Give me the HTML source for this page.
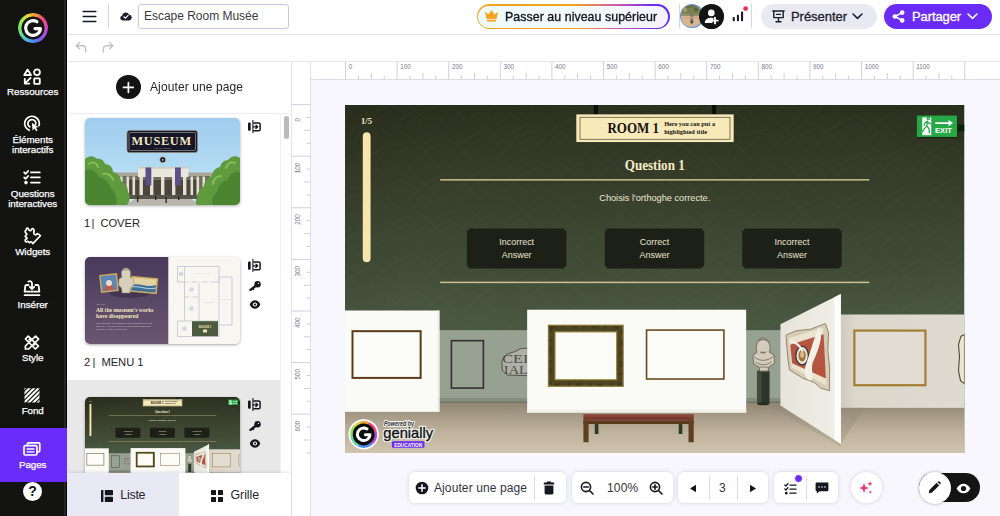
<!DOCTYPE html>
<html lang="fr">
<head>
<meta charset="utf-8">
<title>Escape Room Musée</title>
<style>
*{box-sizing:border-box;margin:0;padding:0}
html,body{width:1000px;height:516px;overflow:hidden;background:#fff;font-family:"Liberation Sans",sans-serif;color:#1b1b1b}
.abs{position:absolute}
#side{position:absolute;left:0;top:0;width:67px;height:516px;background:#131312;border-right:1px solid #000;box-shadow:inset -2px 0 0 #262626}
.sitem{position:absolute;left:0;width:65.400px;text-align:center;color:#fff;font-size:9.800px;line-height:10px;letter-spacing:-0.05px;margin-top:1px;-webkit-text-stroke:0.25px #fff}
.sitem svg{display:block;margin:0 auto}
#pagesbtn{position:absolute;left:0;top:427.700px;width:67px;height:54.100px;background:#6a2cfa}
#top{position:absolute;left:67px;top:0;width:933px;height:35px;background:#fff;border-bottom:1px solid #e3e3ee}
#bar2{position:absolute;left:67px;top:35px;width:933px;height:27px;background:#fff;border-bottom:1px solid #e6e6ee}
#panel{position:absolute;left:67px;top:62px;width:225px;height:454px;background:#fff;border-right:1px solid #e4e4ec}
#canvas{position:absolute;left:292px;top:62px;width:708px;height:454px;background:#f7f7fd}
.thumb{position:absolute;left:85px;width:155px;height:87px;border-radius:5px;overflow:hidden;box-shadow:0 1px 3px rgba(0,0,0,.35)}
.plabel{position:absolute;left:84px;font-size:11.200px;color:#26262e;letter-spacing:-0.05px;white-space:nowrap}
.tbox{position:absolute;top:472.200px;height:31px;background:#fff;border-radius:6px;box-shadow:0 0 4px rgba(60,60,90,.2)}
.ttext{position:absolute;font-size:12px;color:#33333d;white-space:nowrap;margin-top:0.800px}
</style>
</head>
<body>
<svg width="0" height="0" style="position:absolute">
<defs>
<linearGradient id="gbg" x1="0" y1="0" x2="0" y2="1">
<stop offset="0" stop-color="#2c311f"/><stop offset="0.22" stop-color="#363e2a"/><stop offset="0.45" stop-color="#404b35"/><stop offset="0.62" stop-color="#4a5842"/><stop offset="0.8" stop-color="#4d5c48"/><stop offset="1" stop-color="#4c5a47"/>
</linearGradient>
<radialGradient id="vig" cx="0.55" cy="0.45" r="0.75">
<stop offset="0" stop-color="#5a6a50" stop-opacity="0.06"/><stop offset="0.6" stop-color="#000" stop-opacity="0"/><stop offset="1" stop-color="#000" stop-opacity="0.12"/>
</radialGradient>
<linearGradient id="floor" x1="0" y1="0" x2="0" y2="1">
<stop offset="0" stop-color="#8f8572"/><stop offset="0.25" stop-color="#a59a86"/><stop offset="0.6" stop-color="#bfb39d"/><stop offset="1" stop-color="#d0c4ae"/>
</linearGradient>
<linearGradient id="awall" x1="0" y1="0" x2="1" y2="0">
<stop offset="0" stop-color="#e6e4da"/><stop offset="0.5" stop-color="#ebe9e0"/><stop offset="0.88" stop-color="#efeee6"/><stop offset="1" stop-color="#f2f1ea"/>
</linearGradient>
<linearGradient id="rwall" x1="0" y1="0" x2="1" y2="0">
<stop offset="0" stop-color="#cfcabd"/><stop offset="0.12" stop-color="#dcd7cb"/><stop offset="1" stop-color="#dedad0"/>
</linearGradient>
<pattern id="hatch" width="46" height="38" patternUnits="userSpaceOnUse" patternTransform="rotate(-8)">
<path d="M0 30 Q20 10 46 6 M4 38 Q24 16 46 14 M0 6 Q18 20 30 38 M10 0 Q28 18 40 38" fill="none" stroke="#8a9a78" stroke-opacity="0.07" stroke-width="0.6"/>
</pattern>
<symbol id="slide" viewBox="0 0 620 349">
<rect width="620" height="349" fill="url(#gbg)"/>
<rect width="620" height="349" fill="url(#hatch)"/>
<rect width="620" height="349" fill="url(#vig)"/>
<!-- back wall -->
<rect x="90" y="225.5" width="420" height="74" fill="#97a192"/>
<rect x="90" y="293.500" width="420" height="3.500" fill="#858e7e"/><rect x="90" y="297" width="420" height="2.200" fill="#5f6659"/>
<!-- floor -->
<rect x="0" y="298" width="620" height="51" fill="url(#floor)"/>
<!-- small dark frame -->
<rect x="106.5" y="236" width="32" height="47.5" fill="#98a293" stroke="#352f36" stroke-width="1.6"/>
<!-- stone fragment -->
<path d="M183 243.500 L176 244 L170 247 L162 249.500 L157 256 L157.500 266 L163 270.500 L183 271 Z" fill="#aeb0a6" stroke="#4a4b46" stroke-width="0.9"/>
<text x="157.500" y="258.500" font-family="Liberation Serif,serif" font-size="13" fill="#4a4a45" textLength="26" lengthAdjust="spacingAndGlyphs">CEI</text>
<text x="159" y="269.500" font-family="Liberation Serif,serif" font-size="13" fill="#4a4a45" textLength="24" lengthAdjust="spacingAndGlyphs">IAL</text>
<!-- bust -->
<rect x="412.300" y="266.500" width="12.600" height="33" rx="1.500" fill="#2c3628"/>
<rect x="412.300" y="266.500" width="4.500" height="33" fill="#4a5644" opacity=".7"/>
<ellipse cx="418.600" cy="299.300" rx="6.300" ry="1.500" fill="#232b20"/>
<ellipse cx="418.600" cy="266.700" rx="6.300" ry="1.400" fill="#3d4838"/>
<path d="M415 266.500 L414.500 262.500 L409 259 L408.300 251 L412.500 247.500 C410.500 243 411.500 234.500 418.500 233 C425.500 234.500 426.500 243 424.500 247.500 L429.500 250.500 L429.800 258.500 L424 262.500 L423.500 266.500 Z" fill="#d3cbbb" stroke="#6b6152" stroke-width="0.800"/>
<path d="M412.300 240 C412.300 232 424.700 232 424.700 240 C423.500 236.500 421 235.500 418.500 235.500 C416 235.500 413.500 236.500 412.300 240 Z" fill="#857a68"/>
<path d="M415 247 C416.500 249.500 420.500 249.500 422 247" fill="#857a68"/>
<path d="M409.500 252 C414 257 423 257 429 251.500 M411 257.500 C416 261 422 261 427 257 M415 262.500 L423.500 262.500" fill="none" stroke="#7a6f5e" stroke-width="0.900"/>
<!-- left wall -->
<rect x="0" y="205.8" width="94.5" height="101.5" fill="#fafaf6"/>
<rect x="92.5" y="205.8" width="2" height="101.500" fill="#efeee8"/>
<rect x="7.5" y="226.5" width="68.200" height="46.8" fill="#fcfcf9" stroke="#5b3c18" stroke-width="2"/>
<!-- center wall -->
<rect x="182.3" y="205" width="219.200" height="103" fill="#fafaf6"/>
<rect x="182.3" y="305" width="219.200" height="3" fill="#f0efe8"/>
<!-- thick frame -->
<rect x="203" y="220" width="76" height="62.3" fill="#8a7430"/>
<rect x="204.400" y="221.400" width="73.200" height="59.500" fill="#4d4525"/><rect x="205.500" y="222.500" width="71" height="57.300" fill="none" stroke="#2f301c" stroke-width="2.500" stroke-dasharray="6 5 3 7" opacity=".45"/>
<rect x="209.6" y="226.600" width="62.8" height="49.1" fill="#a08a3e"/>
<rect x="210.8" y="227.8" width="60.4" height="46.7" fill="#fbfbf8"/>
<!-- thin frame -->
<rect x="301.8" y="225.4" width="77.4" height="49" fill="#fbfbf8" stroke="#6b4a1e" stroke-width="1.6"/>
<!-- bench -->
<path d="M238.6 310 L349 310 L349 316 L238.6 316 Z" fill="#7a3a2e"/>
<path d="M238.6 310 L349 310 L347 312.500 L240.6 312.500 Z" fill="#8b463a"/>
<path d="M238.6 316 L349 316 L349 319.500 L238.6 319.500 Z" fill="#5a3a1c"/>
<rect x="238.6" y="316" width="5.200" height="21.7" fill="#5e3f1f"/>
<rect x="343.800" y="316" width="5.200" height="21.7" fill="#5e3f1f"/>
<rect x="250" y="319.500" width="3.6" height="10" fill="#2f3a22"/>
<rect x="334" y="319.500" width="3.6" height="10" fill="#2f3a22"/>
<!-- right wall -->
<rect x="496" y="209.8" width="124" height="93.5" fill="url(#rwall)"/>
<rect x="509.800" y="225.900" width="71.100" height="54.7" fill="#e2ddd2" stroke="#a07f34" stroke-width="2.2"/>
<path d="M620 230 L616.500 231.500 L614 240 L615 252 L614 266 L616 276 L620 279 Z" fill="#ece5d2" stroke="#5a4630" stroke-width="1.100"/>
<!-- angled wall shadow on floor -->
<path d="M496.200 339.200 L496.200 303.300 L520 303.300 Z" fill="#8d8372" opacity=".3"/>
<path d="M435.8 300.9 L422 300 L496.200 342 L496.200 339.200 Z" fill="#8d8372" opacity=".25"/>
<!-- angled wall -->
<path d="M496.200 189.300 L496.200 339.200 L435.800 300.900 L435.800 219.600 Z" fill="url(#awall)"/>
<path d="M489.800 192.500 L496.200 189.300 L496.200 339.200 L489.800 335.200 Z" fill="#fefefc"/>
<!-- mosaic -->
<path d="M441.300 230.400 L452 226 L466 224.500 L480.800 218.800 L484 228 L483.200 246 L485 262 L485 286.200 L476 283.500 L470 278 L458 273.500 L444.800 265.300 L443 252 Z" fill="#d6ccb6" stroke="#8b7d63" stroke-width="0.900"/>
<path d="M444 233.500 L478.500 223 L482 281 L447 263 Z" fill="#ece3cf"/>
<path d="M445.500 240 L479 229.500 L481.300 274 L447.500 258.500 Z" fill="#b5543f"/>
<ellipse cx="457.500" cy="251" rx="6.300" ry="9.200" fill="#ebe2cc" stroke="#2e3552" stroke-width="1.300"/>
<ellipse cx="457.500" cy="251" rx="3.600" ry="5.800" fill="#a0703c"/>
<ellipse cx="457.500" cy="250" rx="2" ry="3.200" fill="#d8b98a"/>
<path d="M474 222 C480 228 474 246 468 258 C466 266 470 272 466 276 C460 274 458 268 462 258 C466 246 470 232 474 222 Z" fill="#f3f0e8"/>
<path d="M446 236 C452 238 456 242 458 247" stroke="#f3f0e8" stroke-width="2.200" fill="none"/>
<g transform="translate(0,-0.600)"><!-- UI: plaque -->
<rect x="249" y="0" width="4.200" height="10" fill="#0d0d0b"/>
<rect x="367.200" y="0" width="4.200" height="10" fill="#0d0d0b"/>
<rect x="231.500" y="10" width="157.500" height="27.7" fill="#f8e9b9"/>
<rect x="235.200" y="12.900" width="150.100" height="22" fill="none" stroke="#4a452e" stroke-width="0.7"/>
<text x="262.700" y="28.800" font-family="Liberation Serif,serif" font-weight="bold" font-size="15.500" fill="#15140f" textLength="51.6" lengthAdjust="spacingAndGlyphs">ROOM 1</text>
<text x="319.400" y="21.500" font-family="Liberation Serif,serif" font-weight="bold" font-size="6" fill="#15140f" textLength="51" lengthAdjust="spacingAndGlyphs">Here you can put a</text>
<text x="319.400" y="29.300" font-family="Liberation Serif,serif" font-weight="bold" font-size="6" fill="#15140f" textLength="43" lengthAdjust="spacingAndGlyphs">highlighted title</text>
<!-- question -->
<text x="310" y="66" text-anchor="middle" font-family="Liberation Serif,serif" font-weight="bold" font-size="14.500" fill="#f7ecc6" textLength="60" lengthAdjust="spacingAndGlyphs">Question 1</text>
<rect x="95.200" y="74.800" width="429.500" height="1.5" fill="#cfc08c"/>
<rect x="95.200" y="177.500" width="429.500" height="1.5" fill="#cfc08c"/>
<text x="310" y="97.200" text-anchor="middle" font-family="Liberation Sans,sans-serif" font-size="9" fill="#ece8d6" textLength="111" lengthAdjust="spacingAndGlyphs">Choisis l'orthoghe correcte.</text>
<!-- buttons -->
<g fill="#1d2016">
<path id="btn" d="M124 124.200 L219.500 124.200 L219.500 126.200 L221.500 126.200 L221.500 162.300 L219.500 162.300 L219.500 164.300 L124 164.300 L124 162.300 L122 162.300 L122 126.200 L124 126.200 Z"/>
<use href="#btn" x="138"/>
<use href="#btn" x="275.600"/>
</g>
<g font-family="Liberation Sans,sans-serif" font-size="9" fill="#e8e4d2" text-anchor="middle">
<text x="171.800" y="141.200">Incorrect</text><text x="171.800" y="153.800">Answer</text>
<text x="309.800" y="141.200">Correct</text><text x="309.800" y="153.800">Answer</text>
<text x="447.400" y="141.200">Incorrect</text><text x="447.400" y="153.800">Answer</text>
</g>
<!-- progress -->
<text x="21.500" y="20" text-anchor="middle" font-family="Liberation Serif,serif" font-weight="bold" font-size="8.500" fill="#f7ecc6">1/5</text>
<rect x="17.800" y="28" width="7.800" height="130" rx="3.900" fill="#f8e4ae"/>
<!-- exit -->
<rect x="612" y="20.200" width="8" height="6.800" fill="#0b2208"/>
<rect x="573" y="12.600" width="40.100" height="21.400" fill="#0c0f08" opacity=".45"/>
<rect x="572.400" y="11.200" width="40.100" height="21.400" fill="#27a846"/>
<rect x="577.700" y="13" width="9" height="17.800" fill="#fff"/>
<path d="M583.800 15.200 a1.100 1.100 0 1 1 0.100 0 M583 16.800 L580.500 18.500 L579.500 21 M583 16.800 L582.300 21.500 L579.800 24.500 L577.600 27.500 M582.300 21.500 L584.500 24.500 L584.800 28.500 M583.500 18 L585.800 19.500" stroke="#27a846" stroke-width="1.300" fill="none" stroke-linecap="round" stroke-linejoin="round"/>
<path d="M590.700 18.700 L606 18.700" stroke="#fff" stroke-width="1.800"/>
<path d="M604 15.600 L608.500 18.700 L604 21.800 Z" fill="#fff"/>
<text x="590.500" y="28.800" font-family="Liberation Sans,sans-serif" font-weight="bold" font-size="7.600" fill="#fff" textLength="17" lengthAdjust="spacingAndGlyphs">EXIT</text>
</g><!-- genially logo -->
<circle cx="18.700" cy="329.800" r="15.200" fill="#fff"/>
<circle cx="18.700" cy="329.800" r="12" fill="#0d0d0d"/>
<g fill="none" stroke-width="2.500" transform="translate(18.700,329.800)">
<path d="M-3.100 -11.800 A12.200 12.200 0 0 1 5.200 -11" stroke="#f5a030"/>
<path d="M5.200 -11 A12.200 12.200 0 0 1 11.900 -2.600" stroke="#f0457f"/>
<path d="M11.900 -2.600 A12.200 12.200 0 0 1 7.800 9.400" stroke="#b04cd8"/>
<path d="M7.800 9.400 A12.200 12.200 0 0 1 -5.200 11" stroke="#4a8cf5"/>
<path d="M-5.200 11 A12.200 12.200 0 0 1 -12.100 1.500" stroke="#5fd6a0"/>
<path d="M-12.100 1.500 A12.200 12.200 0 0 1 -9.400 -7.800" stroke="#8fe04a"/>
<path d="M-9.400 -7.800 A12.200 12.200 0 0 1 -3.100 -11.800" stroke="#d0e040"/>
<path d="M3.300 -5.400 A6.300 6.300 0 1 0 6.300 0.500 L1.800 0.500" stroke="#fff" stroke-width="3" stroke-linecap="round" stroke-linejoin="round"/>
</g>
<g font-family="Liberation Sans,sans-serif" stroke-linejoin="round">
<text x="39" y="321.500" font-size="6.600" font-style="italic" font-weight="bold" fill="#fff" stroke="#fff" stroke-width="1.800" textLength="30" lengthAdjust="spacingAndGlyphs">Powered by</text>
<text x="39" y="321.500" font-size="6.600" font-style="italic" font-weight="bold" fill="#2a2a2a" textLength="30" lengthAdjust="spacingAndGlyphs">Powered by</text>
<text x="38.300" y="333.400" font-size="15.200" fill="#fff" stroke="#fff" stroke-width="2.600" textLength="50" lengthAdjust="spacingAndGlyphs">genially</text>
<text x="38.300" y="333.400" font-size="15.200" fill="#151515" stroke="#151515" stroke-width="0.450" textLength="50" lengthAdjust="spacingAndGlyphs">genially</text>
</g>
<rect x="47" y="336.700" width="32.500" height="6.600" rx="1" fill="#6a2cf5"/>
<text x="63.300" y="342" text-anchor="middle" font-family="Liberation Sans,sans-serif" font-weight="bold" font-size="5" fill="#fff" textLength="28" lengthAdjust="spacingAndGlyphs">EDUCATION</text>
</symbol>
</defs>
</svg>
<svg width="0" height="0" style="position:absolute"><defs>
<symbol id="ic-ins" viewBox="0 0 13 13"><rect x="0" y="2.600" width="2.700" height="8.100" rx="1" fill="#16161e"/><path d="M4.900 0.400 V12.400" stroke="#16161e" stroke-width="1.100" fill="none" stroke-linecap="round"/><path d="M5.300 2.900 H10.700 C11.500 2.900 12.100 3.400 12.100 4.200 V9.400 C12.100 10.200 11.500 10.700 10.700 10.700 H5.300" stroke="#16161e" stroke-width="1.500" fill="none"/><path d="M5.300 6.800 H9.400 M7.900 5.100 L9.700 6.800 L7.900 8.500" stroke="#16161e" stroke-width="1.300" fill="none" stroke-linecap="round" stroke-linejoin="round"/></symbol>
<symbol id="ic-key" viewBox="0 0 12 10"><circle cx="8.600" cy="3.300" r="3.200" fill="#16161e"/><circle cx="9.500" cy="2.400" r="0.700" fill="#fff"/><path d="M6.800 4.800 L1.500 8.900" stroke="#16161e" stroke-width="2.400" stroke-linecap="round"/><path d="M3.600 7.400 L4.600 8.600" stroke="#16161e" stroke-width="1.300" stroke-linecap="round"/></symbol>
<symbol id="ic-eye" viewBox="0 0 12 9"><path d="M0.700 4.500 C2 1.600 3.900 0.300 6 0.300 C8.100 0.300 10 1.600 11.300 4.500 C10 7.400 8.100 8.700 6 8.700 C3.900 8.700 2 7.400 0.700 4.500 Z" fill="#16161e"/><circle cx="6" cy="4.500" r="2.100" fill="#fff"/><circle cx="6" cy="4.500" r="1.100" fill="#16161e"/></symbol>
</defs></svg>
<!-- SIDEBAR -->
<div id="side">
<!-- logo -->
<div class="abs" style="left:17.900px;top:13.300px;width:29.800px;height:29.800px;border-radius:50%;background:conic-gradient(from 0deg,#f5a030 0deg,#f5a030 12deg,#f0457f 45deg,#e048a0 75deg,#b04cd8 105deg,#8a55e8 140deg,#4a8cf5 180deg,#4ab8e0 205deg,#5fd6a0 235deg,#7ee060 275deg,#b4e444 315deg,#e0d838 340deg,#f5a030 360deg);-webkit-mask:radial-gradient(circle,transparent 11.200px,#000 11.800px);mask:radial-gradient(circle,transparent 11.200px,#000 11.800px)"></div>
<svg class="abs" style="left:16.800px;top:12.200px" width="32" height="32" viewBox="-16 -16 32 32">
<path d="M3.900 -6.300 A7.400 7.400 0 1 0 7.400 0.600 L2 0.600" fill="none" stroke="#fff" stroke-width="3.200" stroke-linecap="round" stroke-linejoin="round"/>
</svg>

<!-- Ressources -->
<svg class="abs" style="left:23.3px;top:68px" width="19" height="17" viewBox="0 0 19 17" fill="none" stroke="#fff" stroke-width="1.800">
<path d="M4.6 1.6 L8 7 L1.2 7 Z" stroke-linejoin="round"/>
<circle cx="14" cy="4.2" r="2.9"/>
<rect x="11.2" y="10.3" width="5.6" height="5.6" rx="0.6"/>
<path d="M7.6 9.8 L2 15.4 M1.8 11 L1.8 15.6 L6.4 15.6" stroke-linecap="round" stroke-linejoin="round"/>
</svg>
<div class="sitem" style="top:86px">Ressources</div>

<!-- Elements interactifs -->
<svg class="abs" style="left:23.3px;top:115px" width="18" height="17" viewBox="0 0 18 17" fill="none" stroke="#fff" stroke-width="1.700">
<path d="M6.2 15.3 A7.3 7.3 0 1 1 16 10.6" stroke-linecap="round"/>
<path d="M6.8 11.8 A3.9 3.9 0 1 1 12.7 9.2" stroke-linecap="round"/>
<path d="M8.8 7.8 L9.6 15.6 L11.5 13.4 L13.2 16.3 L14.5 15.5 L12.9 12.6 L15.7 12.2 Z" fill="#fff" stroke="none"/>
</svg>
<div class="sitem" style="top:134px">Éléments<br>interactifs</div>

<!-- Questions interactives -->
<svg class="abs" style="left:23.3px;top:170px" width="18" height="15" viewBox="0 0 18 15" fill="none" stroke="#fff" stroke-width="1.800" stroke-linecap="round" stroke-linejoin="round">
<path d="M1.2 2.4 L2.6 3.8 L5.2 1"/><path d="M8 2.4 L16.8 2.4"/>
<path d="M1.2 7.4 L2.6 8.8 L5.2 6"/><path d="M8 7.4 L16.8 7.4"/>
<circle cx="3" cy="12.6" r="0.9" fill="#fff"/><path d="M8 12.6 L16.8 12.6"/>
</svg>
<div class="sitem" style="top:188px">Questions<br>interactives</div>

<!-- Widgets -->
<svg class="abs" style="left:24.300px;top:226.600px" width="18" height="18" viewBox="0 0 18 18" fill="none" stroke="#fff" stroke-width="1.700" stroke-linejoin="round" stroke-linecap="round">
<path d="M2.00 3.00 C2.75 1.67 2.15 0.97 3.50 1.20 C4.85 1.43 4.35 3.53 6.05 3.70 C7.75 3.87 7.25 1.70 8.60 1.70 C9.95 1.70 9.70 2.43 10.10 3.70 C10.50 4.97 9.73 4.32 9.80 5.50 C9.87 6.68 9.53 6.50 10.30 7.25 C11.07 8.00 11.00 7.92 12.10 7.75 C13.20 7.58 12.17 6.41 13.60 6.75 C15.03 7.09 16.40 8.76 16.40 8.76 L8.80 16.60 C8.80 16.60 8.23 15.13 7.06 14.80 C5.89 14.47 6.39 15.77 5.30 15.60 C4.21 15.43 4.90 14.57 3.80 14.30 C2.70 14.03 2.85 15.30 2.00 14.80 C1.15 14.30 0.93 13.97 1.26 12.80 C1.59 11.63 3.00 12.48 3.00 11.30 C3.00 10.12 1.33 10.62 1.26 9.27 C1.19 7.92 2.80 8.61 2.80 7.25 C2.80 5.89 1.53 6.62 1.26 5.20 C0.99 3.78 1.25 4.33 2.00 3.00 Z"/>
</svg>
<div class="sitem" style="top:246px">Widgets</div>

<!-- Inserer -->
<svg class="abs" style="left:23.3px;top:280px" width="18" height="17" viewBox="0 0 18 17" fill="none" stroke="#fff" stroke-width="1.800" stroke-linecap="round" stroke-linejoin="round">
<path d="M5.5 5 L3.6 5 C2.8 5 2.4 5.5 2.3 6.2 L1.6 11.6 L16.4 11.6 L15.7 6.2 C15.6 5.5 15.2 5 14.4 5 L12.5 5"/>
<path d="M1.6 15.2 L16.4 15.2"/>
<path d="M5.4 1.6 C7.6 0.6 9 1.6 9 3.6 L9 8.6 M6.8 6.8 L9 9 L11.2 6.8"/>
</svg>
<div class="sitem" style="top:299px">Insérer</div>

<!-- Style -->
<svg class="abs" style="left:24.3px;top:335px" width="16" height="15" viewBox="0 0 16 15" fill="none" stroke="#fff" stroke-width="1.700" stroke-linecap="round" stroke-linejoin="round">
<path d="M11.6 1.2 L14.6 4.2 L4.6 14 L1.4 14 L1.4 11 Z"/>
<path d="M4.2 1.2 L1.4 4 L11.4 14 L14.4 11.2 Z"/>
<path d="M5 5 L6.4 3.6 M10 10 L11.4 8.6"/>
</svg>
<div class="sitem" style="top:352px">Style</div>

<!-- Fond -->
<svg class="abs" style="left:24.3px;top:388px" width="16" height="15" viewBox="0 0 16 15" stroke="#fff" stroke-width="2.1">
<clipPath id="cf"><rect x="0.5" y="0.3" width="15" height="14.2"/></clipPath>
<g clip-path="url(#cf)">
<path d="M-3 4 L5 -4 M-3 8.6 L9.6 -4 M-3 13.2 L14.2 -4 M-1 15.8 L18 -3.2 M3.6 15.8 L18 1.4 M8.2 15.8 L18 6 M12.8 15.8 L18 10.6"/>
</g>
</svg>
<div class="sitem" style="top:405px">Fond</div>

<!-- Pages -->
<div id="pagesbtn"></div>
<svg class="abs" style="left:23.3px;top:442px" width="18" height="14" viewBox="0 0 18 14" fill="none" stroke="#fff" stroke-width="1.700" stroke-linejoin="round" stroke-linecap="round">
<path d="M4.4 3.4 L4.4 2 C4.4 1.3 4.9 0.8 5.6 0.8 L15.6 0.8 C16.3 0.8 16.8 1.3 16.8 2 L16.8 8.6 C16.8 9.3 16.3 9.8 15.6 9.8 L14.4 9.8"/>
<rect x="1" y="3.6" width="13" height="9.4" rx="1.4"/>
<path d="M4 7 L11 7 M4 9.8 L11 9.8" stroke-width="1.3"/>
</svg>
<div class="sitem" style="top:459px">Pages</div>

<!-- help -->
<div class="abs" style="left:23px;top:481.800px;width:19px;height:19px;border-radius:50%;background:#fff;color:#111;font-weight:bold;font-size:14px;line-height:19.500px;text-align:center">?</div>
</div>
<!-- TOP BAR -->
<div id="top"></div>
<!-- hamburger -->
<svg class="abs" style="left:82px;top:10px" width="15" height="13" viewBox="0 0 15 13" stroke="#16162a" stroke-width="1.5" stroke-linecap="round"><path d="M1.2 1.5 L13.8 1.5 M1.2 6.6 L13.8 6.6 M1.2 11.6 L13.8 11.6"/></svg>
<div class="abs" style="left:108px;top:4px;width:1px;height:24px;background:#d6d6e6"></div>
<!-- cloud -->
<svg class="abs" style="left:120px;top:12px" width="12" height="9" viewBox="0 0 12 9"><path d="M3 8.4 C1.4 8.4 0.3 7.4 0.3 6 C0.3 4.8 1.1 3.9 2.2 3.7 C2.4 1.9 3.9 0.6 5.7 0.6 C7.2 0.6 8.4 1.4 9 2.7 C10.6 2.8 11.7 4 11.7 5.5 C11.7 7.1 10.5 8.4 8.9 8.4 Z" fill="#1c1c2c"/><path d="M3.9 4.8 L5.4 6.2 L8.1 3.4" fill="none" stroke="#fff" stroke-width="1.2" stroke-linecap="round" stroke-linejoin="round"/></svg>
<!-- title input -->
<div class="abs" style="left:138px;top:4px;width:151px;height:25px;border:1px solid #c8c8e4;border-radius:3px;background:#fff"></div>
<div class="abs" id="ttl" style="left:144px;top:9px;font-size:12px;line-height:15px;color:#3a3a44;white-space:nowrap;letter-spacing:-0.02px">Escape Room Musée</div>

<!-- upgrade button -->
<div class="abs" style="left:476.800px;top:3.900px;width:193px;height:25.200px;border-radius:13px;background:linear-gradient(90deg,#f5a21c 0%,#f5a21c 50%,#d05ab0 72%,#6a2cf5 92%,#5a2cf5 100%)"></div>
<div class="abs" style="left:478.400px;top:5.500px;width:189.800px;height:22px;border-radius:11px;background:linear-gradient(90deg,#eefafa 0%,#f1fafb 60%,#f5f2ff 100%)"></div>
<svg class="abs" style="left:485px;top:10px" width="13" height="12" viewBox="0 0 13 12" fill="#f5a21c"><path d="M0.6 2.6 L3.6 5 L6.5 0.6 L9.4 5 L12.4 2.6 L11.2 8.6 L1.8 8.6 Z" stroke="#f5a21c" stroke-width="0.8" stroke-linejoin="round"/><rect x="1.8" y="9.8" width="9.4" height="1.6" rx="0.6"/></svg>
<div class="abs" id="upg" style="left:505px;top:9px;font-size:13px;line-height:15px;color:#16161e;white-space:nowrap;-webkit-text-stroke:0.35px #16161e;letter-spacing:0.05px;transform-origin:0 50%;transform:scaleX(.953)">Passer au niveau supérieur</div>

<div class="abs" style="left:679px;top:4px;width:1px;height:24px;background:#d6d6e6"></div>
<!-- avatar -->
<div class="abs" style="left:679.500px;top:4.200px;width:24px;height:24px;border-radius:50%;background:#5b8df6;overflow:hidden">
<div class="abs" style="left:1.300px;top:1.300px;width:21.400px;height:21.400px;border-radius:50%;overflow:hidden;background:#d7b58c">
<svg width="22" height="22" viewBox="0 0 22 22" style="position:absolute;left:0;top:0"><rect width="22" height="22" fill="#d9b68c"/><rect width="22" height="9.500" fill="#76814f"/><path d="M0 9 C3 7 5 10 8 8.500 C11 7 13 10 16 8.500 C18 7.500 20 9 22 8 L22 11 L0 11 Z" fill="#8c8f60"/><path d="M0 2 C4 0 7 4 11 2 C15 0 18 3 22 1 L22 0 L0 0 Z" fill="#5f6d43"/><circle cx="4" cy="5" r="2" fill="#a0a070"/><circle cx="15" cy="4.500" r="2.200" fill="#59683f"/><rect x="9.300" y="9.500" width="3" height="7.500" rx="1.200" fill="#6f7680"/><circle cx="10.800" cy="8.800" r="1.300" fill="#7a736a"/><rect x="9.500" y="16" width="2.600" height="2.400" fill="#4c4a44"/><path d="M0 12 C6 11 16 11 22 12 L22 14 L0 14 Z" fill="#c9a57c" opacity=".6"/></svg>
</div></div>
<!-- add user -->
<div class="abs" style="left:699.200px;top:4.200px;width:24.600px;height:24.600px;border-radius:50%;background:#141414"></div>
<svg class="abs" style="left:703px;top:8px" width="17" height="17" viewBox="0 0 17 17" fill="#fff"><circle cx="8.300" cy="4.900" r="3.300"/><path d="M1.800 15 C1.800 11.600 4.600 9.700 8.300 9.700 C9.600 9.700 10.300 9.900 10.900 10.200 C9.600 11.300 9.200 13 9.600 15 Z"/><path d="M12 9.800 V15.400 M9.200 12.600 H14.800" stroke="#fff" stroke-width="1.900" stroke-linecap="round"/></svg>
<!-- stats -->
<svg class="abs" style="left:731px;top:4px" width="20" height="20" viewBox="731 4 20 20"><rect x="732.700" y="17.100" width="2.100" height="4.200" rx="0.700" fill="#1c1c2c"/><rect x="736.900" y="14.800" width="2.100" height="6.500" rx="0.700" fill="#1c1c2c"/><rect x="741" y="11.600" width="2.100" height="9.700" rx="0.700" fill="#1c1c2c"/><circle cx="745.600" cy="8.600" r="2.400" fill="#e8304f"/></svg>
<div class="abs" style="left:751px;top:4px;width:1px;height:24px;background:#d6d6e6"></div>

<!-- Presenter -->
<div class="abs" style="left:761px;top:4px;width:116px;height:25px;border-radius:13px;background:#e9e9f2"></div>
<svg class="abs" style="left:772px;top:10px" width="13" height="13" viewBox="0 0 13 13" fill="none" stroke="#1c1c2c" stroke-width="1.4" stroke-linejoin="round" stroke-linecap="round"><path d="M0.8 1 L12.2 1"/><path d="M1.8 1.2 L1.8 7.6 L11.2 7.6 L11.2 1.2"/><path d="M4.6 4.4 L8.4 4.4"/><path d="M6.5 7.8 L6.5 11.6 M4 11.8 L9 11.8"/></svg>
<div class="abs" id="pres" style="left:791px;top:9px;font-size:13px;line-height:15px;color:#1c1c2c;white-space:nowrap;-webkit-text-stroke:0.3px #1c1c2c;letter-spacing:-0.05px">Présenter</div>
<svg class="abs" style="left:852px;top:13px" width="11" height="7" viewBox="0 0 11 7" fill="none" stroke="#1c1c2c" stroke-width="1.5" stroke-linecap="round" stroke-linejoin="round"><path d="M1 1 L5.5 5.4 L10 1"/></svg>

<!-- Partager -->
<div class="abs" style="left:884px;top:4px;width:108px;height:25px;border-radius:13px;background:#6a2cf5"></div>
<svg class="abs" style="left:892px;top:10px" width="13" height="13" viewBox="0 0 13 13" fill="#fff"><circle cx="10.2" cy="2.6" r="2.3"/><circle cx="2.8" cy="6.5" r="2.3"/><circle cx="10.2" cy="10.4" r="2.3"/><path d="M2.8 6.5 L10.2 2.6 M2.8 6.5 L10.2 10.4" stroke="#fff" stroke-width="1.5"/></svg>
<div class="abs" id="part" style="left:912px;top:9px;font-size:13px;line-height:15px;color:#fff;white-space:nowrap;-webkit-text-stroke:0.3px #fff;letter-spacing:-0.1px">Partager</div>
<svg class="abs" style="left:967px;top:13px" width="11" height="7" viewBox="0 0 11 7" fill="none" stroke="#fff" stroke-width="1.5" stroke-linecap="round" stroke-linejoin="round"><path d="M1 1 L5.5 5.4 L10 1"/></svg>

<div id="bar2"></div>
<svg class="abs" style="left:75px;top:42px" width="12" height="11" viewBox="0 0 12 11" fill="none" stroke="#c2c2cc" stroke-width="1.500" stroke-linecap="round" stroke-linejoin="round"><path d="M4.4 0.8 L1.2 3.8 L4.4 6.8 M1.4 3.8 L7.4 3.8 C9.4 3.8 10.6 5 10.6 7 L10.6 10"/></svg>
<svg class="abs" style="left:102px;top:42px" width="12" height="11" viewBox="0 0 12 11" fill="none" stroke="#c2c2cc" stroke-width="1.500" stroke-linecap="round" stroke-linejoin="round"><path d="M7.6 0.8 L10.8 3.8 L7.6 6.8 M10.6 3.8 L4.6 3.8 C2.6 3.8 1.4 5 1.4 7 L1.4 10"/></svg>

<!-- PANEL -->
<div id="panel"></div>
<!-- add page -->
<div class="abs" style="left:116px;top:74.500px;width:24.500px;height:24.500px;border-radius:50%;background:#141414"></div>
<svg class="abs" style="left:122px;top:80.500px" width="13" height="13" viewBox="0 0 13 13"><path d="M6.400 1.500 V11.300 M1.500 6.400 H11.300" stroke="#fff" stroke-width="1.700" stroke-linecap="round"/></svg>
<div class="abs" id="ajp" style="left:149.700px;top:79px;font-size:12.800px;line-height:15px;color:#26262e;white-space:nowrap;letter-spacing:0.100px;transform-origin:0 50%;transform:scaleX(.94)">Ajouter une page</div>
<div class="abs" style="left:67px;top:113px;width:225px;height:1px;background:#ececf2"></div>
<div class="abs" style="left:279.500px;top:114px;width:1px;height:359px;background:#f0f0f5"></div>
<div class="abs" style="left:283.500px;top:116px;width:5px;height:22.500px;border-radius:2.500px;background:#b9b9bf"></div>
<!-- selected bg -->
<div class="abs" style="left:67px;top:379.500px;width:213px;height:94px;background:#e8e8e9"></div>

<!-- thumb 1 -->
<div class="thumb" style="top:118px">
<svg width="155" height="87" viewBox="0 0 155 87">
<defs><linearGradient id="sky" x1="0" y1="0" x2="0" y2="1"><stop offset="0" stop-color="#9fcdee"/><stop offset="0.600" stop-color="#b4dbf3"/><stop offset="1" stop-color="#d5ecf8"/></linearGradient></defs>
<rect width="155" height="87" fill="url(#sky)"/>
<!-- ground -->
<path d="M40 87 L56 77 L100 77 L116 87 Z" fill="#b9b6ae"/>
<rect x="0" y="80" width="155" height="7" fill="#7f9a5c" opacity=".0"/>
<!-- building -->
<rect x="26" y="54.500" width="103" height="3.600" fill="#a9a597"/>
<rect x="30" y="58" width="95" height="20" fill="#6f6b5e"/>
<rect x="42" y="62" width="71" height="16" fill="#4a463c"/>
<g fill="#e4e0d4">
<rect x="35" y="58.500" width="2.600" height="19"/><rect x="41.500" y="58.500" width="2.600" height="19"/><rect x="47.500" y="58.500" width="2.600" height="19"/>
<rect x="54.500" y="59" width="3.400" height="19"/><rect x="65" y="59" width="3.400" height="19"/><rect x="76" y="59" width="3.400" height="19"/><rect x="87" y="59" width="3.400" height="19"/><rect x="98" y="59" width="3.400" height="19"/>
<rect x="105.500" y="58.500" width="2.600" height="19"/><rect x="111.500" y="58.500" width="2.600" height="19"/><rect x="117.500" y="58.500" width="2.600" height="19"/>
</g>
<rect x="53" y="49" width="50.500" height="10" fill="#e9e6dc"/>
<rect x="53" y="49" width="50.500" height="1.600" fill="#cfcbbf"/>
<rect x="60.500" y="49.500" width="5.800" height="18" fill="#5b4f8a"/><rect x="90" y="49.500" width="5.800" height="18" fill="#5b4f8a"/>
<rect x="30" y="77" width="95" height="4" fill="#57544a"/>
<g fill="#24241f"><rect x="52" y="78" width="1.300" height="6"/><rect x="70" y="78" width="1.300" height="4"/><rect x="80.500" y="79" width="1.300" height="6"/><rect x="93" y="78" width="1.300" height="4"/></g>
<!-- trees -->
<path d="M0 87 L0 41 C4 37 9 37.500 12 41 C16 40 19 43 20 46 C25 46 28 50 28 54 C33 55 36 59 36 63 C40 65 43 69 43 74 C46 78 45 84 42 87 Z" fill="#5f9a3e"/>
<path d="M0 87 L0 52 C6 50 12 54 14 59 C20 60 25 65 26 71 C31 74 33 81 31 87 Z" fill="#4b8532"/>
<path d="M4 46 C8 43 12 45 13 49 M18 56 C23 55 27 58 28 62" stroke="#86bd5a" stroke-width="2" fill="none" stroke-linecap="round"/>
<path d="M155 87 L155 40 C151 37 146 38 143 42 C139 42 136 45 135 49 C130 50 127 54 127 58 C122 60 119 64 119 68 C115 70 112 75 112 80 C110 83 111 86 112 87 Z" fill="#5f9a3e"/>
<path d="M155 87 L155 54 C149 53 144 57 143 62 C137 63 133 68 132 74 C128 77 126 83 128 87 Z" fill="#4b8532"/>
<path d="M150 45 C146 43 142 46 141 50 M136 58 C131 58 128 62 128 66" stroke="#86bd5a" stroke-width="2" fill="none" stroke-linecap="round"/>
<!-- plaque -->
<rect x="42" y="12.500" width="70.500" height="22" rx="2.500" fill="#17172c" stroke="#8f8a78" stroke-width="0.800"/>
<rect x="44" y="14.500" width="66.500" height="18" rx="1.500" fill="none" stroke="#d9cfa6" stroke-width="0.500"/>
<text x="76.300" y="27.300" text-anchor="middle" font-family="Liberation Serif,serif" font-weight="bold" font-size="12.300" fill="#f3e7bd" textLength="59.500" lengthAdjust="spacing">MUSEUM</text>
<text x="77.300" y="31.200" text-anchor="middle" font-family="Liberation Serif,serif" font-size="2.400" fill="#cfc59f">ESCAPE ROOM</text>
<circle cx="77.700" cy="41.800" r="3" fill="#17172c" stroke="#d9cfa6" stroke-width="0.600"/><circle cx="77.700" cy="41.800" r="0.900" fill="#d9cfa6"/>
</svg></div>
<svg class="abs" style="left:248px;top:119.800px" width="13" height="13"><use href="#ic-ins"/></svg>
<div class="plabel" id="pl1" style="top:216px;line-height:14px">1<span style="margin-left:1.200px">|</span><span style="margin-left:6.200px">COVER</span></div>

<!-- thumb 2 -->
<div class="thumb" style="top:257px">
<svg width="155" height="87" viewBox="0 0 155 87">
<defs><linearGradient id="pur" x1="0" y1="0" x2="0" y2="1"><stop offset="0" stop-color="#49395b"/><stop offset="1" stop-color="#695670"/></linearGradient></defs>
<rect width="155" height="87" fill="#f8f6f0"/>
<rect width="83.300" height="87" fill="url(#pur)"/>
<ellipse cx="45" cy="36" rx="20" ry="5" fill="#3c2f4c" opacity=".7"/>
<g transform="rotate(-6 24 26)"><rect x="15" y="17" width="18" height="18" fill="#c9a85a"/><rect x="16.500" y="18.500" width="15" height="15" fill="#5b86b8"/><path d="M18 33 L24 22 L29 33 Z" fill="#c25a4a"/><circle cx="24" cy="26" r="3" fill="#e8ddd0"/></g>
<g transform="rotate(5 59 28)"><rect x="45.500" y="20" width="27" height="16" fill="#c9a85a"/><rect x="47" y="21.500" width="24" height="13" fill="#e3d3a4"/><path d="M47 29 C54 26 62 31 71 27 L71 34.500 L47 34.500 Z" fill="#3f6f9a"/><path d="M47 31 C55 29 63 33 71 30" stroke="#dfe9ee" stroke-width="0.800" fill="none"/></g>
<path d="M37 36 L36.500 31 L33.500 28 L34 22 L37 20 C35.500 16 36.500 11.500 41 11 C45.500 11.500 46.500 16 45 20 L48.500 22 L49 28 L45.500 31 L45 36 Z" fill="#d8cfbb" stroke="#8a8170" stroke-width="0.500"/>
<path d="M37.500 14.500 C38.500 10.500 44 10.500 45 14.500 C43 12.800 39.500 12.800 37.500 14.500 Z" fill="#a59b86"/>
<text x="11" y="47.500" font-family="Liberation Serif,serif" font-size="2.600" fill="#cbbfd0">The start</text>
<text x="11" y="54.800" font-family="Liberation Serif,serif" font-weight="bold" font-size="5.700" fill="#f3e7bd" textLength="57.500" lengthAdjust="spacingAndGlyphs">All the museum's works</text>
<text x="11" y="60.600" font-family="Liberation Serif,serif" font-weight="bold" font-size="5.700" fill="#f3e7bd" textLength="42.500" lengthAdjust="spacingAndGlyphs">have disappeared</text>
<g font-family="Liberation Sans,sans-serif" font-size="2.200" fill="#cfc4d4">
<text x="11" y="67" textLength="57" lengthAdjust="spacingAndGlyphs">The paintings, the sculptures and art works have van-</text>
<text x="11" y="69.800" textLength="55" lengthAdjust="spacingAndGlyphs">ished too. Your work is to find each of them and solve</text>
<text x="11" y="72.600" textLength="31" lengthAdjust="spacingAndGlyphs">a mystery. Can you help us?</text>
</g>
<!-- floor plan -->
<g fill="none" stroke="#c6c9d2" stroke-width="0.900">
<path d="M92.500 9.500 H134 V25 H92.500 Z"/><path d="M99.500 9.500 V25"/>
<path d="M99.500 25 V64 M114 25 V64 M134 20 V64"/>
<path d="M134 20 H147 V68 H134"/>
<path d="M99.500 40 H114"/>
<path d="M92.500 64 H134 V79.500 H92.500 Z"/>
</g>
<path d="M103 25 H107 M111 25 H118 M122 25 H126 M104 40 H108" stroke="#f8f6f0" stroke-width="1.400"/>
<g fill="#d5d7de"><circle cx="96" cy="17" r="2.300"/><circle cx="106.500" cy="32.500" r="2.300"/><circle cx="106.500" cy="51.500" r="2.300"/><circle cx="99.500" cy="71.500" r="2.300"/></g>
<g font-family="Liberation Serif,serif" font-size="2.800" fill="#bfc2cc" text-anchor="middle"><text x="117" y="16.500">MAIN HALL</text><text x="124" y="45.500">ROOM 3</text><text x="141" y="43">ROOM</text><text x="141" y="46.600">2</text></g>
<rect x="107" y="64.200" width="26" height="15" fill="#4b5a3e"/>
<text x="120" y="70.500" text-anchor="middle" font-family="Liberation Serif,serif" font-weight="bold" font-size="3.200" fill="#f3e7bd">ROOM 1</text>
<rect x="118" y="72.600" width="4" height="3" rx="0.600" fill="#f3e7bd"/>
</svg></div>
<svg class="abs" style="left:248px;top:258.900px" width="13" height="13"><use href="#ic-ins"/></svg>
<svg class="abs" style="left:248.500px;top:280.500px" width="12" height="10"><use href="#ic-key"/></svg>
<svg class="abs" style="left:248.500px;top:299.800px" width="12" height="9"><use href="#ic-eye"/></svg>
<div class="plabel" id="pl2" style="top:355px;line-height:14px">2<span style="margin-left:2.200px">|</span><span style="margin-left:6.200px">MENU 1</span></div>

<!-- thumb 3 -->
<div class="thumb" style="top:396.500px">
<svg width="155" height="87" viewBox="0 0 620 349" preserveAspectRatio="none"><use href="#slide"/></svg>
</div>
<svg class="abs" style="left:248px;top:398.200px" width="13" height="13"><use href="#ic-ins"/></svg>
<svg class="abs" style="left:248.500px;top:420.500px" width="12" height="10"><use href="#ic-key"/></svg>
<svg class="abs" style="left:248.500px;top:439px" width="12" height="9"><use href="#ic-eye"/></svg>

<!-- tabs -->
<div class="abs" style="left:67px;top:473px;width:224px;height:43px;background:#fff;box-shadow:0 -1px 3px rgba(40,40,70,.12)"></div>
<div class="abs" style="left:67px;top:473px;width:112px;height:43px;background:#e9e8f5"></div>
<svg class="abs" style="left:101px;top:490px" width="12" height="12" viewBox="0 0 12 12" fill="#16161e"><rect x="0" y="0" width="2.400" height="12" rx="0.500"/><rect x="3.800" y="0" width="8.200" height="5.200" rx="0.700"/><rect x="3.800" y="6.800" width="8.200" height="5.200" rx="0.700"/></svg>
<div class="abs" id="liste" style="left:120.300px;top:488px;font-size:12.400px;line-height:15px;color:#26262e;letter-spacing:-0.250px">Liste</div>
<svg class="abs" style="left:211px;top:490px" width="12" height="12" viewBox="0 0 12 12" fill="#16161e"><rect x="0" y="0" width="5" height="5" rx="0.600"/><rect x="7" y="0" width="5" height="5" rx="0.600"/><rect x="0" y="7" width="5" height="5" rx="0.600"/><rect x="7" y="7" width="5" height="5" rx="0.600"/></svg>
<div class="abs" id="grille" style="left:230.500px;top:488px;font-size:12.400px;line-height:15px;color:#26262e;letter-spacing:-0.050px">Grille</div>

<!-- CANVAS -->
<div id="canvas"></div>
<div class="abs" style="left:292px;top:62px;width:708px;height:18px;background:#fff;border-bottom:1px solid #dcdcea"></div>
<div class="abs" style="left:292px;top:62px;width:19px;height:454px;background:#fff;border-right:1px solid #dcdcea"></div>
<div class="abs" style="left:292px;top:62px;width:19px;height:18px;background:#fff;border-right:1px solid #e0e0ec"></div>
<svg class="abs" style="left:292px;top:61px" width="708" height="455" viewBox="292 61 708 455" font-family="Liberation Sans,sans-serif" font-size="6.3" fill="#787888"><text x="348.7" y="69.3">0</text><text x="400.3" y="69.3">100</text><text x="451.9" y="69.3">200</text><text x="503.5" y="69.3">300</text><text x="555.1" y="69.3">400</text><text x="606.7" y="69.3">500</text><text x="658.3" y="69.3">600</text><text x="709.9" y="69.3">700</text><text x="761.5" y="69.3">800</text><text x="813.1" y="69.3">900</text><text x="864.7" y="69.3">1000</text><text x="916.3" y="69.3">1100</text><text transform="translate(299.8,121.6) rotate(-90)">0</text><text transform="translate(299.8,173.2) rotate(-90)">100</text><text transform="translate(299.8,224.8) rotate(-90)">200</text><text transform="translate(299.8,276.4) rotate(-90)">300</text><text transform="translate(299.8,328.0) rotate(-90)">400</text><text transform="translate(299.8,379.6) rotate(-90)">500</text><text transform="translate(299.8,431.2) rotate(-90)">600</text><path d="M345.5 62 V79.5 M397.1 62 V79.5 M448.7 62 V79.5 M500.3 62 V79.5 M551.9 62 V79.5 M603.5 62 V79.5 M655.1 62 V79.5 M706.7 62 V79.5 M758.3 62 V79.5 M809.9 62 V79.5 M861.5 62 V79.5 M913.1 62 V79.5 M964.7 62 V79.5 M292 104.6 H310.5 M292 156.2 H310.5 M292 207.8 H310.5 M292 259.4 H310.5 M292 311.0 H310.5 M292 362.6 H310.5 M292 414.2 H310.5" stroke="#cfcfe2" stroke-width="1" fill="none"/><path d="M371.3 73 V79.5 M422.9 73 V79.5 M474.5 73 V79.5 M526.1 73 V79.5 M577.7 73 V79.5 M629.3 73 V79.5 M680.9 73 V79.5 M732.5 73 V79.5 M784.1 73 V79.5 M835.7 73 V79.5 M887.3 73 V79.5 M938.9 73 V79.5 M304 130.4 H310.5 M304 182.0 H310.5 M304 233.6 H310.5 M304 285.2 H310.5 M304 336.8 H310.5 M304 388.4 H310.5 M304 440.0 H310.5 M358.4 75.5 V79.5 M384.2 75.5 V79.5 M410.0 75.5 V79.5 M435.8 75.5 V79.5 M461.6 75.5 V79.5 M487.4 75.5 V79.5 M513.2 75.5 V79.5 M539.0 75.5 V79.5 M564.8 75.5 V79.5 M590.6 75.5 V79.5 M616.4 75.5 V79.5 M642.2 75.5 V79.5 M668.0 75.5 V79.5 M693.8 75.5 V79.5 M719.6 75.5 V79.5 M745.4 75.5 V79.5 M771.2 75.5 V79.5 M797.0 75.5 V79.5 M822.8 75.5 V79.5 M848.6 75.5 V79.5 M874.4 75.5 V79.5 M900.2 75.5 V79.5 M926.0 75.5 V79.5 M951.8 75.5 V79.5 M306.5 117.5 H310.5 M306.5 143.3 H310.5 M306.5 169.1 H310.5 M306.5 194.9 H310.5 M306.5 220.7 H310.5 M306.5 246.5 H310.5 M306.5 272.3 H310.5 M306.5 298.1 H310.5 M306.5 323.9 H310.5 M306.5 349.7 H310.5 M306.5 375.5 H310.5 M306.5 401.3 H310.5 M306.5 427.1 H310.5 M306.5 452.9 H310.5" stroke="#cdcdde" stroke-width="1" fill="none"/></svg>
<svg class="abs" style="left:345.200px;top:104.500px" width="619.500" height="348.500" viewBox="0 0 620 349" preserveAspectRatio="none"><use href="#slide"/></svg>


<!-- bottom toolbar -->
<div class="tbox" style="left:409px;width:157px"></div>
<svg class="abs" style="left:415px;top:481px" width="14" height="14" viewBox="0 0 14 14"><circle cx="7" cy="7" r="6.300" fill="#16161e"/><path d="M7 3.800 V10.200 M3.800 7 H10.200" stroke="#fff" stroke-width="1.500" stroke-linecap="round"/></svg>
<div class="ttext" id="addp" style="left:434px;top:480px;line-height:15px;letter-spacing:0.1px">Ajouter une page</div>
<div class="abs" style="left:534px;top:476px;width:1px;height:24px;background:#dcdce8"></div>
<svg class="abs" style="left:543px;top:481px" width="12" height="14" viewBox="0 0 12 14" fill="#16161e"><path d="M4.200 0.600 H7.800 L8.400 1.600 H11.200 V3.400 H0.800 V1.600 H3.600 Z"/><path d="M1.600 4.400 H10.400 V12 C10.400 12.900 9.800 13.400 9 13.400 H3 C2.200 13.400 1.600 12.900 1.600 12 Z"/></svg>
<div class="tbox" style="left:572px;width:101px"></div>
<svg class="abs" style="left:580px;top:481px" width="14" height="14" viewBox="0 0 14 14" fill="none" stroke="#16161e" stroke-width="1.600" stroke-linecap="round"><circle cx="6" cy="6" r="4.600"/><path d="M9.500 9.500 L13 13 M3.800 6 H8.200"/></svg>
<div class="ttext" style="left:607px;top:480px;line-height:15px;color:#333;letter-spacing:0.2px">100%</div>
<svg class="abs" style="left:649px;top:481px" width="14" height="14" viewBox="0 0 14 14" fill="none" stroke="#16161e" stroke-width="1.600" stroke-linecap="round"><circle cx="6" cy="6" r="4.600"/><path d="M9.500 9.500 L13 13 M3.800 6 H8.200 M6 3.800 V8.200"/></svg>
<div class="tbox" style="left:678.200px;width:89.800px"></div>
<svg class="abs" style="left:689px;top:484px" width="8" height="9" viewBox="0 0 8 9"><path d="M7 0.800 V8.200 L1 4.500 Z" fill="#16161e"/></svg>
<div class="abs" style="left:709px;top:476px;width:1px;height:24px;background:#dcdce8"></div>
<div class="ttext" style="left:719px;top:480px;line-height:15px;color:#333">3</div>
<div class="abs" style="left:737px;top:476px;width:1px;height:24px;background:#dcdce8"></div>
<svg class="abs" style="left:749px;top:484px" width="8" height="9" viewBox="0 0 8 9"><path d="M1 0.800 V8.200 L7 4.500 Z" fill="#16161e"/></svg>
<div class="tbox" style="left:774px;width:64px"></div>
<svg class="abs" style="left:784px;top:482.500px" width="13" height="12" viewBox="0 0 14 13" fill="none" stroke="#16161e" stroke-width="1.400" stroke-linecap="round" stroke-linejoin="round"><path d="M0.800 2 L2 3.200 L4.200 0.800 M6.400 2.200 H13 M0.800 6.400 L2 7.600 L4.200 5.200 M6.400 6.600 H13 M6.400 11 H13"/><circle cx="2.400" cy="11" r="0.800" fill="#16161e"/></svg>
<div class="abs" style="left:793.900px;top:474.400px;width:9px;height:9px;border-radius:50%;background:#6a2cf5;border:0.500px solid #fff"></div>
<div class="abs" style="left:806px;top:476px;width:1px;height:24px;background:#dcdce8"></div>
<svg class="abs" style="left:815px;top:482px" width="14" height="12" viewBox="0 0 14 12"><path d="M1.800 0.600 H12.200 C12.900 0.600 13.400 1.100 13.400 1.800 V8 C13.400 8.700 12.900 9.200 12.200 9.200 H4.600 L1.800 11.600 V9.200 C1.100 9.200 0.600 8.700 0.600 8 V1.800 C0.600 1.100 1.100 0.600 1.800 0.600 Z" fill="#16161e"/><circle cx="4" cy="5" r="0.800" fill="#fff"/><circle cx="7" cy="5" r="0.800" fill="#fff"/><circle cx="10" cy="5" r="0.800" fill="#fff"/></svg>
<div class="abs" style="left:850.800px;top:472.300px;width:31px;height:31px;border-radius:50%;background:#fff;box-shadow:0 0 4px rgba(60,60,90,.2)"></div>
<svg class="abs" style="left:858px;top:480px" width="16" height="16" viewBox="0 0 16 16" fill="#f0356e"><path d="M6 3 L7.300 6.700 L11 8 L7.300 9.300 L6 13 L4.700 9.300 L1 8 L4.700 6.700 Z"/><path d="M12 1.200 L12.700 3.100 L14.600 3.800 L12.700 4.500 L12 6.400 L11.300 4.500 L9.400 3.800 L11.300 3.100 Z"/><path d="M12.200 10 L12.700 11.400 L14.100 11.900 L12.700 12.400 L12.200 13.800 L11.700 12.400 L10.300 11.900 L11.700 11.400 Z"/></svg>
<div class="abs" style="left:918.500px;top:473.400px;width:61.200px;height:28.800px;border-radius:14.400px;background:#141414"></div>
<div class="abs" style="left:918.600px;top:471.700px;width:32.200px;height:32.200px;border-radius:50%;background:#fff;box-shadow:0 0 3px rgba(0,0,0,.35)"></div>
<svg class="abs" style="left:928.300px;top:481.300px" width="13" height="13" viewBox="0 0 13 13" fill="#141414"><path d="M8.600 1.800 L11.200 4.400 L4 11.600 L0.800 12.200 L1.400 9 Z"/><path d="M9.400 1 L10.200 0.400 C10.600 0.100 11.100 0.100 11.500 0.500 L12.500 1.500 C12.900 1.900 12.900 2.400 12.600 2.800 L12 3.600 Z"/></svg>
<svg class="abs" style="left:956.300px;top:482.500px" width="15" height="11" viewBox="0 0 15 11"><path d="M0.600 5.500 C2.400 2.200 4.800 0.700 7.500 0.700 C10.200 0.700 12.600 2.200 14.400 5.500 C12.600 8.800 10.200 10.300 7.500 10.300 C4.800 10.300 2.400 8.800 0.600 5.500 Z" fill="#fff"/><circle cx="7.500" cy="5.500" r="2.600" fill="#141414"/></svg>
</body>
</html>
